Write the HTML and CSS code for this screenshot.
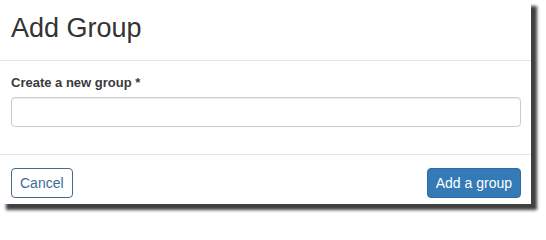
FILE: index.html
```html
<!DOCTYPE html>
<html>
<head>
<meta charset="utf-8">
<link rel="stylesheet" href="styles.css">
</head>
<body>
<div class="dialog">
  <div class="dialog-header">
    <h4 class="dialog-title">Add Group</h4>
  </div>
  <div class="dialog-body">
    <label class="field-label" for="group">Create a new group *</label>
    <input class="field-input" id="group" type="text">
  </div>
  <div class="dialog-footer">
    <button class="btn btn-outline">Cancel</button>
    <button class="btn btn-primary">Add a group</button>
  </div>
</div>
</body>
</html>
```
FILE: styles.css
```css
html, body {
  margin: 0;
  padding: 0;
  background: #fff;
}
body {
  font-family: "Liberation Sans", Arial, sans-serif;
  color: #333;
  height: 220px;
}
.dialog {
  width: 531px;
  height: 204px;
  background: #fff;
  box-shadow: 6px 6px 3px rgba(0, 0, 0, 0.75);
  display: flex;
  flex-direction: column;
}
.dialog-header {
  padding: 13px 10px 17px 11px;
  border-bottom: 1px solid #e5e5e5;
}
.dialog-title {
  margin: 0;
  font-size: 27px;
  line-height: 30px;
  font-weight: normal;
  color: #333;
}
.dialog-body {
  padding: 14px 10px 27px 11px;
  display: flex;
  flex-direction: column;
}
.field-label {
  font-size: 13px;
  line-height: 15px;
  font-weight: bold;
  color: #3a3a3a;
  margin-bottom: 7px;
}
.field-input {
  box-sizing: border-box;
  width: 100%;
  height: 30px;
  margin: 0;
  border: 1px solid #ccc;
  border-radius: 4px;
  box-shadow: inset 0 1px 1px rgba(0, 0, 0, 0.075);
  font-family: inherit;
  font-size: 14px;
  padding: 4px 10px;
  outline: none;
}
.dialog-footer {
  border-top: 1px solid #e5e5e5;
  padding: 13px 10px 6px 11px;
  display: flex;
  justify-content: space-between;
  align-items: flex-start;
}
.btn {
  box-sizing: border-box;
  height: 30px;
  padding: 0 8px;
  border-radius: 4px;
  font-family: inherit;
  font-size: 14px;
  line-height: 28px;
  cursor: pointer;
}
.btn-outline {
  background: #fff;
  border: 1px solid #44698b;
  color: #3b6d9a;
}
.btn-primary {
  background: #337ab7;
  border: 1px solid #2e6da4;
  color: #fff;
}
```
